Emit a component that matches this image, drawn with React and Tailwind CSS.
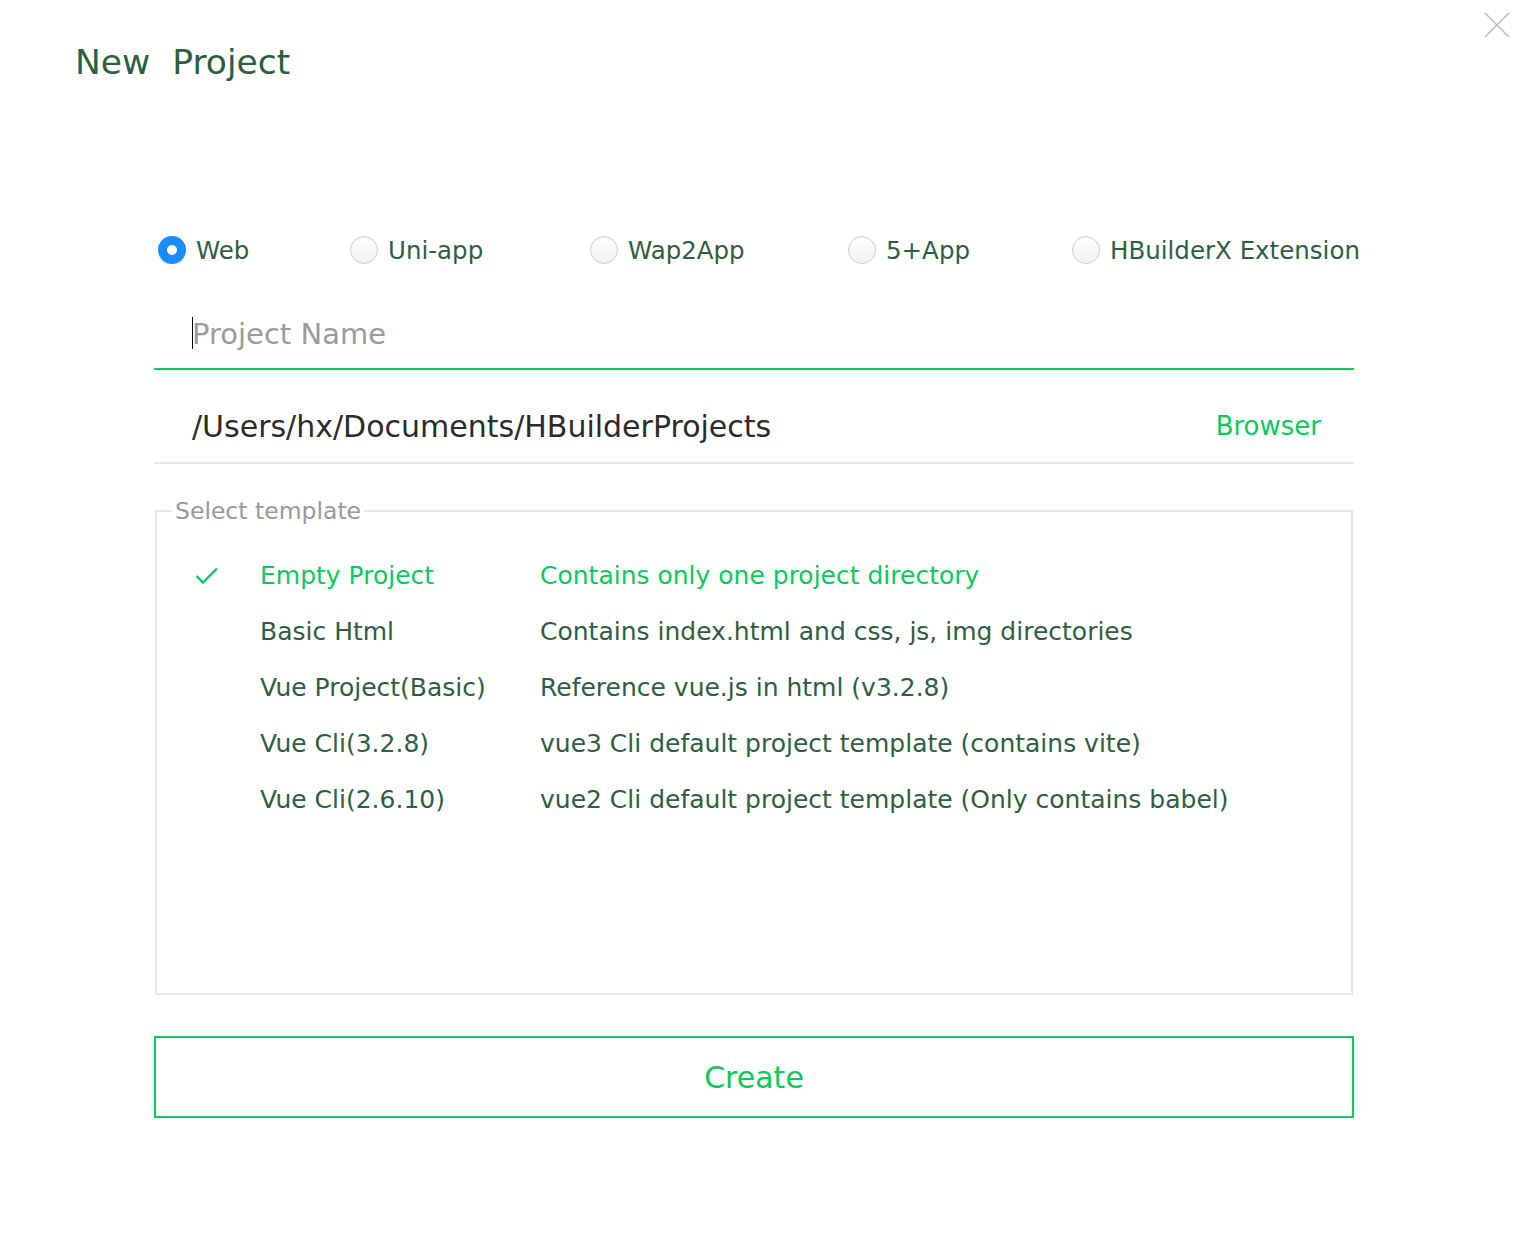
import React, { useState } from 'react';

const FONT = { fontFamily: '"DejaVu Sans", "Noto Sans", sans-serif' };

const projectTypes = [
    { id: 'web', label: 'Web', width: 'w-[192px]' },
    { id: 'uni', label: 'Uni-app', width: 'w-[240px]' },
    { id: 'wap', label: 'Wap2App', width: 'w-[258px]' },
    { id: 'five', label: '5+App', width: 'w-[224px]' },
    { id: 'ext', label: 'HBuilderX Extension', width: '' },
];

const templates = [
    { name: 'Empty Project', desc: 'Contains only one project directory' },
    { name: 'Basic Html', desc: 'Contains index.html and css, js, img directories' },
    { name: 'Vue Project(Basic)', desc: 'Reference vue.js in html (v3.2.8)' },
    { name: 'Vue Cli(3.2.8)', desc: 'vue3 Cli default project template (contains vite)' },
    { name: 'Vue Cli(2.6.10)', desc: 'vue2 Cli default project template (Only contains babel)' },
];

function Radio({ checked }) {
    if (checked) {
        return (
            <span className="w-7 h-7 rounded-full bg-[#1b8cff] flex items-center justify-center shrink-0">
                <span className="w-[10px] h-[10px] rounded-full bg-white" />
            </span>
        );
    }
    return (
        <span className="w-7 h-7 rounded-full border border-[#cdcdcd] bg-gradient-to-b from-white to-[#f1f1f1] shadow-[inset_0_1px_1px_rgba(0,0,0,0.04)] shrink-0" />
    );
}

export default function App() {
    const [type, setType] = useState('web');
    const [selected, setSelected] = useState(0);
    const [name, setName] = useState('');

    return (
        <div className="relative w-full min-h-[1238px] bg-white flex flex-col" style={FONT}>
            {/* close */}
            <button className="absolute top-[12px] right-[18px] w-[26px] h-[26px]">
                <svg width="26" height="26" viewBox="0 0 26 26">
                    <path d="M1 1 L25 25 M25 1 L1 25" stroke="#bdbdbd" strokeWidth="1.6" fill="none" />
                </svg>
            </button>

            <h1 className="pl-[75px] pt-[38px] text-[34.5px] leading-[48px] text-[#2f5e3f]">
                New&nbsp;&nbsp;Project
            </h1>

            <div className="ml-[154px] w-[1200px] flex flex-col">
                {/* project type */}
                <div className="mt-[150px] pl-[4px] flex items-center h-7">
                    {projectTypes.map((t) => (
                        <label
                            key={t.id}
                            onClick={() => setType(t.id)}
                            className={`${t.width} shrink-0 flex items-center gap-[10px] cursor-pointer`}
                        >
                            <Radio checked={type === t.id} />
                            <span className="text-[24.5px] leading-7 pt-[2px] text-[#2f5e3f] whitespace-nowrap">{t.label}</span>
                        </label>
                    ))}
                </div>

                {/* name */}
                <div className="relative mt-[36px] h-[70px] border-b-2 border-[#0cc75b] flex items-center">
                    <span className="absolute left-[38px] top-[17px] w-px h-[32px] bg-black" />
                    <input
                        value={name}
                        onChange={(e) => setName(e.target.value)}
                        placeholder="Project Name"
                        className="w-full h-full pl-[38px] text-[29px] text-[#333] placeholder:text-[#9b9b9b] outline-none bg-transparent caret-transparent"
                    />
                </div>

                {/* location */}
                <div className="h-[94px] pt-[20px] pl-[38px] pr-[33px] border-b-2 border-[#e6e6e6] flex items-center justify-between">
                    <span className="text-[30px] text-[#2b2b2b]">/Users/hx/Documents/HBuilderProjects</span>
                    <button className="text-[26px] text-[#0cc75b]">Browser</button>
                </div>

                {/* templates */}
                <fieldset className="mt-[34px] ml-px w-[1198px] border-2 border-[#e6e6e6]">
                    <legend className="ml-[15px] px-[3px] text-[23.5px] leading-[26px] text-[#999]">Select template</legend>
                    <div className="h-[469px] pt-[24px]">
                        {templates.map((t, i) => {
                            const active = i === selected;
                            return (
                                <div
                                    key={t.name}
                                    onClick={() => setSelected(i)}
                                    className={`h-[56px] pl-[38px] flex items-center cursor-pointer text-[25px] ${active ? 'text-[#0cc75b]' : 'text-[#2f5e3f]'}`}
                                >
                                    <span className="w-[65px] flex items-center">
                                        {active && (
                                            <svg width="24" height="20" viewBox="0 0 24 20">
                                                <path d="M1.5 10 L8 16.5 L22 2.5" stroke="#0cc75b" strokeWidth="2.4" fill="none" />
                                            </svg>
                                        )}
                                    </span>
                                    <span className="w-[280px] whitespace-nowrap">{t.name}</span>
                                    <span className="whitespace-nowrap">{t.desc}</span>
                                </div>
                            );
                        })}
                    </div>
                </fieldset>

                <button className="mt-[41px] h-[82px] w-full border-2 border-[#0cc75b] text-[30px] text-[#0cc75b]">
                    Create
                </button>
            </div>
        </div>
    );
}
